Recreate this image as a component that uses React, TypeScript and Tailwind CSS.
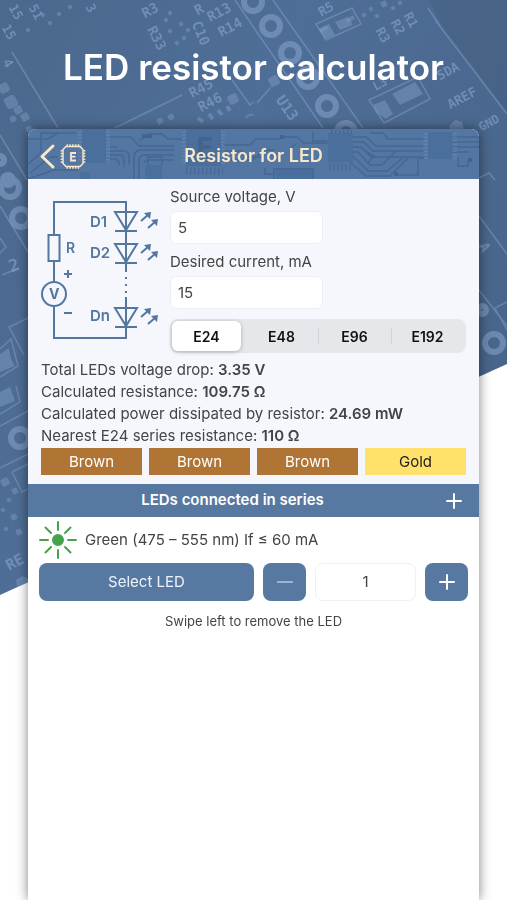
import { useState } from "react";

const RINGS: [number, number, number][] = [
  [253, 2, 9], [271, 26, 9], [290, 53, 9], [308, 78, 9], [327, 106, 9], [346, 132, 9],
  [0, 160, 4], [8, 180, 5], [10, 188, 9], [21, 218, 9], [20, 438, 9], [494, 343, 9], [482, 310, 4],
];

const PRINTS: [string, number, number, number, number][] = [
  ["15", 16, 12, 62, 13], ["51", 36, 12, 62, 13], ["15", 9, 32, 62, 13], ["4", 8, 63, 62, 13],
  ["3", 91, 8, 62, 13], ["R33", 157, 38, 62, 14], ["R3", 150, 10, -28, 14], ["R", 199, 9, -28, 14],
  ["R13", 219, 12, -28, 14], ["C10", 201, 33, 68, 14], ["R14", 230, 27, -28, 14],
  ["R45", 201, 88, -28, 14], ["R46", 210, 102, -28, 14], ["R5", 326, 9, -28, 13],
  ["R1", 411, 20, 62, 13], ["R2", 398, 27, 62, 13], ["R3", 383, 35, 62, 13],
  ["L3", 380, 84, -28, 12], ["U13", 287, 108, 55, 15], ["SDA", 448, 71, -28, 13],
  ["AREF", 462, 98, -28, 13], ["GND", 489, 123, -28, 12], ["2", 14, 265, -20, 17],
  ["RE", 15, 562, -28, 15], ["A", 485, 247, 62, 14],
];

const DOTS: [number, number, number][] = [
  [233, 99, 5], [170, 13, 2], [181, 24, 2], [188, 30, 2], [177, 43, 2], [184, 38, 2], [166, 20, 2], [170, 31, 2],
  [160, 121, 3], [171, 117, 3], [28, 30, 2], [43, 15, 2], [50, 23, 2], [59, 14, 2],
  [70, 7, 2], [4, 88, 5], [11, 102, 6], [18, 110, 4], [25, 117, 4], [13, 119, 3], [29, 129, 3],
  [364, 15, 2], [371, 9, 2], [377, 16, 2], [384, 4, 3], [393, 8, 2], [400, 3, 2], [274, 81, 5],
  [5, 482, 4], [15, 491, 3], [9, 500, 2], [3, 510, 2], [14, 517, 3], [6, 529, 2], [19, 532, 3],
];

function BoardBackdrop() {
  return (
    <svg viewBox="0 0 507 600" className="absolute inset-x-0 top-0 h-auto w-full" aria-hidden="true">
      <defs>
        <linearGradient id="board" x1="0" y1="0" x2="1" y2="0.6">
          <stop offset="0" stopColor="#4b688d" />
          <stop offset="0.45" stopColor="#4f6e97" />
          <stop offset="1" stopColor="#48658a" />
        </linearGradient>
        <clipPath id="slant">
          <path d="M0 0H507V364L0 595Z" />
        </clipPath>
      </defs>
      <path d="M0 0H507V364L0 595Z" fill="url(#board)" />
      <g clipPath="url(#slant)">
        <path d="M430 0H507V112L440 22Z" fill="#456082" opacity=".6" />
        <g fill="none" stroke="#7f9bc2" strokeWidth="1.5" opacity=".55">
          <path d="M12 52L58 128M0 135L27 180M115 128L182 95M235 0L254 28L323 128M273 0L363 128" />
          <path d="M435 20L507 114M428 8L440 26M479 216L507 254M479 290L507 326M0 206L28 252" />
          <path d="M316 24L352 8L361 24L326 40ZM369 100L418 77L430 99L384 123Z" />
          <path d="M232 80L250 105L254 102M246 118Q248 114 254 115M257 103L271 87" />
          <path d="M0 349L11 339L18 366L0 377M0 414L20 402L16 386M0 426L28 411M0 468L28 454" />
          <path d="M28 318L9 327L24 355M0 238L6 247L0 253M2 275L19 268" />
          <path d="M12 472L28 464M12 472L22 492L28 489M479 178L489 173L495 180M507 302L495 308L507 330" />
        </g>
        <g stroke="#7f9bc2" strokeWidth="4" opacity=".5">
          <path d="M198 118L203 122M209 114L213 119M218 110L222 115M227 106L230 111M320 31L327 27M347 21L354 17" />
        </g>
        <g fill="#7f9bc2" opacity=".5">
          <path d="M319 29L329 24L335 35L325 39ZM335 22L348 17L353 25L340 30Z" />
          <path d="M373 105L385 100L393 114L386 119L376 112ZM392 94L415 82L423 94L400 105Z" />
          <path d="M0 354L9 348L11 359L15 366L0 372ZM0 392L10 387L15 401L0 407Z" />
          <path d="M449 126L455 120L462 122L464 130L450 131ZM16 580L22 576L28 578V592L18 594Z" />
        </g>
        <g fill="none" stroke="#7c98c0" strokeWidth="6" opacity=".7">
          {RINGS.map(([x, y, r]) => (
            <circle key={`${x}-${y}`} cx={x} cy={y} r={r} />
          ))}
        </g>
        <g fill="#7c98c0" opacity=".5">
          {DOTS.map(([x, y, r]) => (
            <rect key={`${x}-${y}`} x={x - r} y={y - r} width={r * 2} height={r * 2} rx={r / 2} transform={`rotate(-28 ${x} ${y})`} />
          ))}
        </g>
        <g fill="#809dc5" opacity=".7" className="font-['DejaVu_Sans_Mono',monospace] font-bold" textAnchor="middle" dominantBaseline="central">
          {PRINTS.map(([label, x, y, angle, size]) => (
            <text key={`${x}-${y}`} x={x} y={y} fontSize={size} transform={`rotate(${angle} ${x} ${y})`}>
              {label}
            </text>
          ))}
        </g>
      </g>
    </svg>
  );
}

function HeaderTraces() {
  return (
    <svg viewBox="0 0 451 50" preserveAspectRatio="xMidYMid slice" className="absolute inset-0 size-full" aria-hidden="true">
      <g fill="#4b6f9d">
        <path d="M54 0H78V34H54ZM117 36H134V50H117ZM158 0H193V37H158ZM52 43H62V50H52ZM300 4H325V33H300ZM400 3H424V30H400ZM248 39H285V50H248Z" />
      </g>
      <g fill="none" stroke="#42648f" strokeWidth="1.5" opacity=".8">
        <path d="M0 35L13 24V4H48M2 44L22 28H30M0 10H20L30 4M0 50L26 41H50" />
        <path d="M82 8H103L111 17H146M82 18H90M82 22H96Q101 22 101 28V35M82 26H92Q96 26 96 33V38M82 30H87Q91 30 91 36M106 50V28Q106 21 113 21H146M111 50V32Q111 26 117 26H146M116 34Q117 31 121 31H146" />
        <path d="M111 12L121 5H134L140 10H154M120 36V28H134V36M196 16H222L228 10H252M196 22H214L219 28H235M196 31H225L236 21H246M237 39V45H245M246 50V40H285V50M256 8H269L276 14H300M262 20L269 14M285 3V12H299" />
        <path d="M325 8H338L348 17H395M325 13H336L345 22H395M325 18H333L343 28H395M325 23H330L342 36H354L368 22M325 27L340 42H359L376 28M322 33L338 47H362L381 28M334 20L346 27L340 34M367 46H390V29H397M342 4H355L360 10H395M424 8H451M424 13H451M424 18H451M424 23H441M430 28V37H440V31" />
      </g>
      <g stroke="#6785b0" strokeWidth="4" strokeDasharray="1.5 2" opacity=".7">
        <path d="M52 2V34M80 2V34M156 2V36M195 2V36M398 4V30M427 4V30" />
      </g>
      <g stroke="#42648f" strokeWidth="7" strokeDasharray="1.5 2.5" opacity=".65">
        <path d="M158 42H195M301 38H324M303 1H324" />
      </g>
      <path d="M170 8H184V12H175V16H183V20H175V25H184V29H170Z" fill="#42648f" />
      <path d="M114 7H124M252 8H256M366 45H370M440 31H444" stroke="#42648f" strokeWidth="4" />
    </svg>
  );
}

function BackIcon() {
  return (
    <svg viewBox="0 0 50 30" className="h-[30px] w-[50px]" fill="none" stroke="#f9e7c9" aria-hidden="true">
      <path d="M16 5L5 15.500L16 26" strokeWidth="3" strokeLinecap="round" strokeLinejoin="round" />
      <path d="M29 5.500H43L46 8.500V22.500L43 25.500H29L26 22.500V8.500Z" strokeWidth="1.500" />
      <path d="M29.500 4.200H43M29.500 26.800H43" strokeWidth="2" strokeDasharray="1.500 1.300" />
      <path d="M24.700 9V22.500M47.300 9V22.500" strokeWidth="2" strokeDasharray="1.500 1.300" />
      <path d="M39 12H34V19.500H39M34 15.700H38.500" strokeWidth="1.800" />
    </svg>
  );
}

function Led({ y }: { y: number }) {
  return (
    <g transform={`translate(0 ${y})`}>
      <path d="M74 0H96L85 18ZM74 19H96" strokeWidth="2" />
      <path d="M100 9L108 2M107 16L115 9" strokeWidth="2" />
      <path d="M103 1L110 0L109 7ZM110 8L117 7L116 14Z" fill="#53779f" stroke="none" />
    </g>
  );
}

function Circuit() {
  return (
    <svg viewBox="0 0 120 142" className="h-[142px] w-[120px]" fill="none" stroke="#53779f" role="img" aria-label="LED circuit">
      <path d="M13 35V3H85V73M13 63V82M13 108V139H85V98" strokeWidth="2" />
      <path d="M85 78V96" strokeWidth="2" strokeDasharray="2 5" />
      <rect x="7.500" y="36" width="11" height="26" strokeWidth="2" />
      <circle cx="13" cy="95" r="12" strokeWidth="2" />
      <path d="M23 75H31M27 71V79M23 114H31" strokeWidth="2" />
      <Led y={13} />
      <Led y={45} />
      <Led y={109} />
      <g fill="#53779f" stroke="none" className="text-[15px] font-semibold">
        <text x="49" y="28">D1</text>
        <text x="49" y="59">D2</text>
        <text x="49" y="122">Dn</text>
        <text x="25" y="54" className="text-[14px]">R</text>
        <text x="8" y="100" className="text-[14px] font-bold">V</text>
      </g>
    </svg>
  );
}

function PlusIcon() {
  return (
    <svg viewBox="0 0 16 16" className="size-4" stroke="white" strokeWidth="2" strokeLinecap="round" aria-hidden="true">
      <path d="M1 8H15M8 1V15" />
    </svg>
  );
}

function SunIcon() {
  return (
    <svg viewBox="0 0 38 38" className="size-[38px]" stroke="#46a34b" strokeWidth="2" strokeLinecap="round" aria-hidden="true">
      <circle cx="19" cy="19" r="5" fill="#46a34b" />
      <path d="M19 1V9M19 29V37M1 19H9M29 19H37M6.500 6.500L12 12M26 26L31.500 31.500M31.500 6.500L26 12M12 26L6.500 31.500" />
    </svg>
  );
}

const SERIES = ["E24", "E48", "E96", "E192"];
const FIELD = "h-[33px] w-[153px] rounded-md border border-[#eceef2] bg-white px-[7px] text-[15px] text-[#444] outline-none";

export default function App() {
  const [series, setSeries] = useState("E24");
  const [count, setCount] = useState(1);

  return (
    <div className="relative flex min-h-screen flex-col overflow-hidden bg-white font-['Inter','Liberation_Sans',sans-serif] text-[#444]">
      <BoardBackdrop />
      <h1 className="relative flex h-[129px] items-center justify-center pt-1 text-center text-[35px] leading-[44px] font-semibold text-white">
        LED resistor calculator
      </h1>

      <main className="relative mx-7 flex flex-1 flex-col overflow-hidden rounded-t-lg bg-white shadow-[0_0_12px_rgba(0,0,0,0.5)]">
        <header className="relative flex h-[50px] items-center justify-center bg-[#5476a2] pt-[3px]">
          <HeaderTraces />
          <button type="button" aria-label="Back" className="absolute left-[9px]">
            <BackIcon />
          </button>
          <h2 className="relative text-[18px] font-semibold text-[#f9e7c9]">Resistor for LED</h2>
        </header>

        <section className="bg-[#f5f7fc] px-[13px] pb-[9px]">
          <div className="flex gap-2 pt-2">
            <div className="w-[121px] shrink-0 pt-3">
              <Circuit />
            </div>
            <div className="flex flex-1 flex-col">
              <label htmlFor="voltage" className="mb-1 text-[15px] leading-5">Source voltage, V</label>
              <input id="voltage" defaultValue="5" className={FIELD} />
              <label htmlFor="current" className="mt-2 mb-1 text-[15px] leading-5">Desired current, mA</label>
              <input id="current" defaultValue="15" className={FIELD} />
              <div className="mt-[10px] grid h-[34px] grid-cols-4 rounded-lg bg-[#e6e7eb] p-[2px]">
                {SERIES.map((name, i) => (
                  <button
                    key={name}
                    type="button"
                    aria-pressed={series === name}
                    onClick={() => setSeries(name)}
                    className={
                      "relative rounded-md text-[14px] font-semibold text-[#111] " +
                      (series === name ? "mr-1 bg-white shadow-[0_1px_4px_rgba(0,0,0,0.25)]" : "")
                    }
                  >
                    {i > 1 && <span className="absolute top-[7px] left-0 h-4 w-px bg-[#d2d3d8]" />}
                    {name}
                  </button>
                ))}
              </div>
            </div>
          </div>

          <div className="mt-[6px] text-[15px] leading-[22px]">
            <p>Total LEDs voltage drop: <b className="font-semibold">3.35 V</b></p>
            <p>Calculated resistance: <b className="font-semibold">109.75 Ω</b></p>
            <p>Calculated power dissipated by resistor: <b className="font-semibold">24.69 mW</b></p>
            <p>Nearest {series} series resistance: <b className="font-semibold">110 Ω</b></p>
          </div>

          <div className="mt-[1px] grid grid-cols-4 gap-[7px] text-center text-[15px] leading-[27px] text-white">
            <span className="bg-[#b07434]">Brown</span>
            <span className="bg-[#b07434]">Brown</span>
            <span className="bg-[#b07434]">Brown</span>
            <span className="bg-[#ffe16c] text-[#222]">Gold</span>
          </div>
        </section>

        <div className="relative flex h-[33px] items-center justify-center bg-[#5678a1]">
          <h3 className="pr-[42px] text-[15px] font-semibold text-white">LEDs connected in series</h3>
          <button type="button" aria-label="Add LED" className="absolute right-[17px]">
            <PlusIcon />
          </button>
        </div>

        <section className="px-[11px] pt-1">
          <div className="flex items-center gap-2">
            <SunIcon />
            <span className="text-[15px]">Green (475 – 555 nm) If ≤ 60 mA</span>
          </div>
          <div className="mt-1 flex h-[38px] gap-[9px]">
            <button type="button" className="flex-1 rounded-lg bg-[#5678a1] text-[15px] text-[#edf3fc]">Select LED</button>
            <button
              type="button"
              aria-label="Fewer"
              onClick={() => setCount((n) => Math.max(1, n - 1))}
              className="flex w-[43px] items-center justify-center rounded-lg bg-[#5678a1]"
            >
              <span className="h-[2px] w-4 bg-[#9db3ce]" />
            </button>
            <input
              aria-label="Number of LEDs"
              value={count}
              onChange={(e) => setCount(Number(e.target.value) || 1)}
              className="w-[101px] rounded-lg border border-[#f0f1f3] bg-white text-center text-[15px] outline-none"
            />
            <button
              type="button"
              aria-label="More"
              onClick={() => setCount((n) => n + 1)}
              className="flex w-[43px] items-center justify-center rounded-lg bg-[#5678a1]"
            >
              <PlusIcon />
            </button>
          </div>
          <p className="mt-[10px] text-center text-[13px] leading-5">Swipe left to remove the LED</p>
        </section>
      </main>
    </div>
  );
}
